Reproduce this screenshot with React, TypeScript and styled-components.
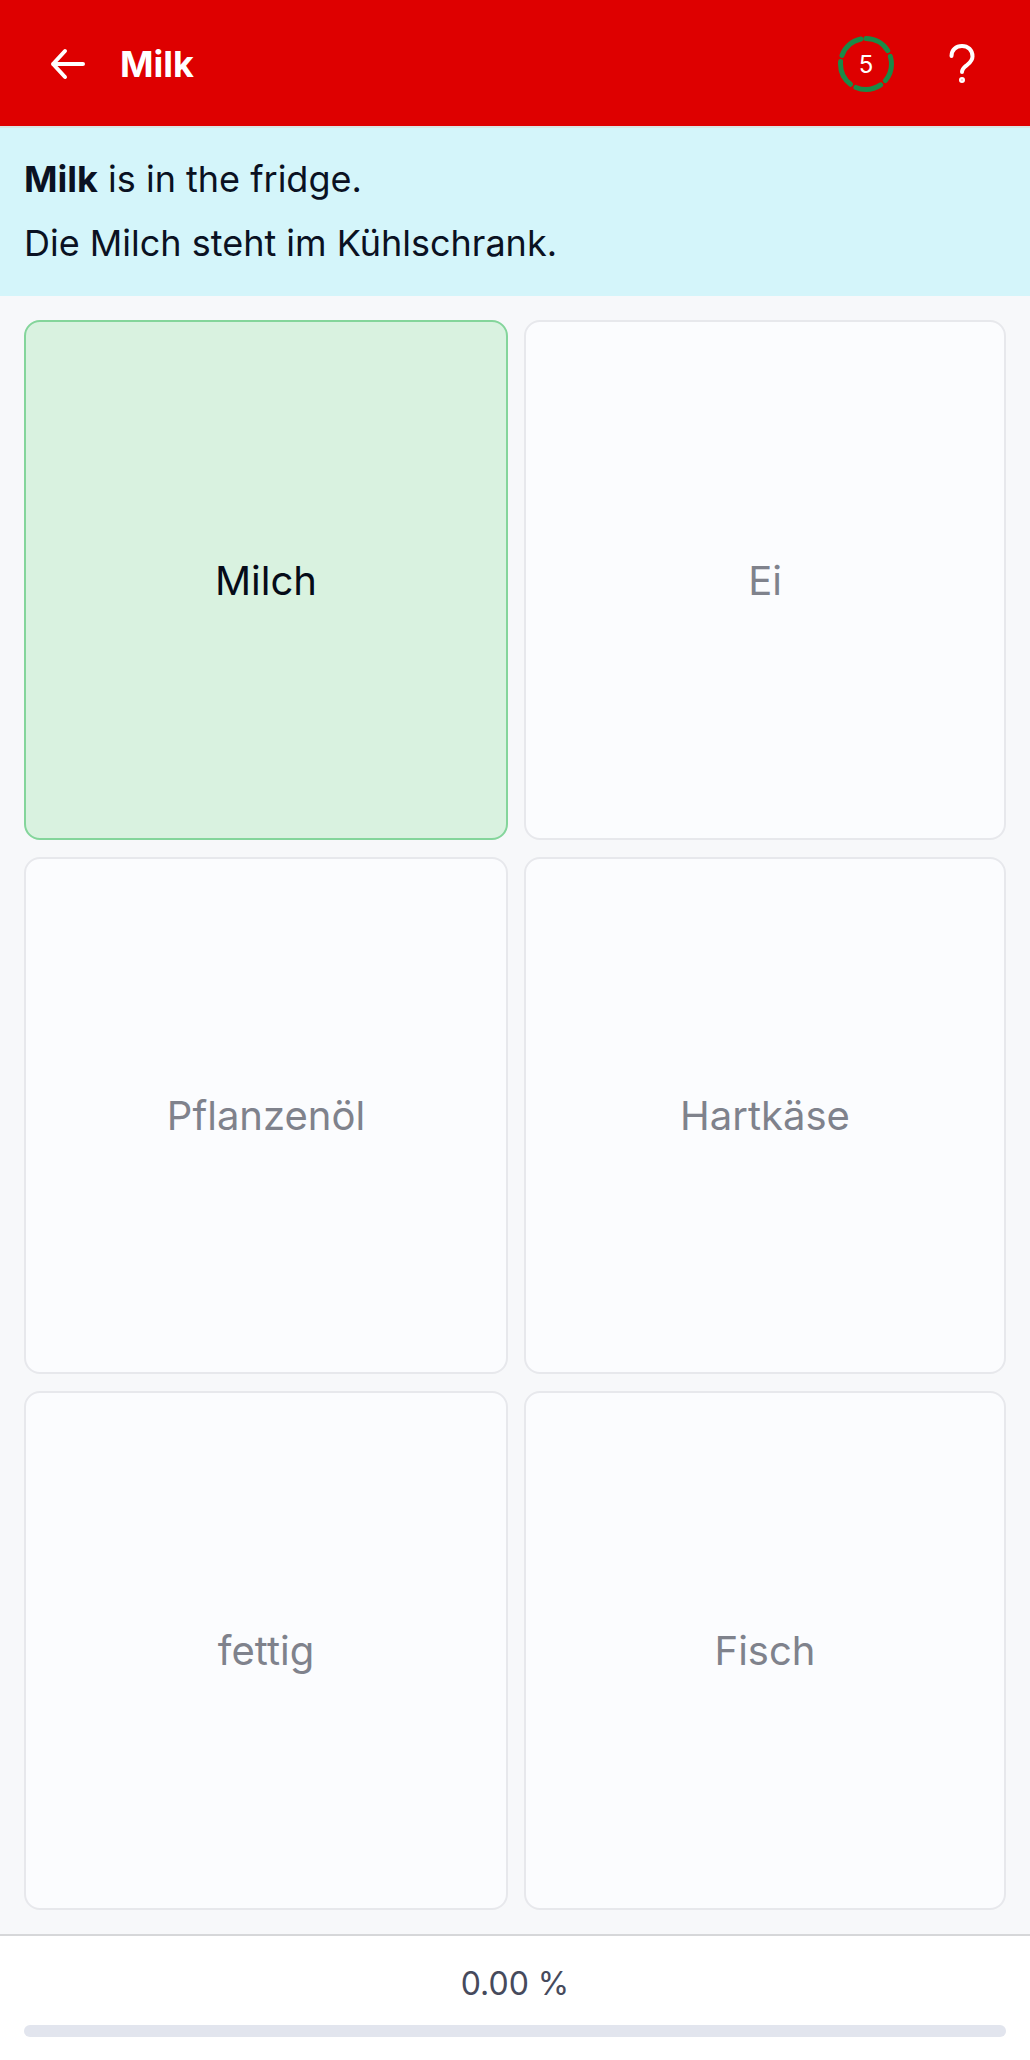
import React from "react";
import styled, { createGlobalStyle } from "styled-components";

const GlobalStyle = createGlobalStyle`
  html, body {
    margin: 0;
    padding: 0;
    background: #f7f8fa;
  }
  * {
    box-sizing: border-box;
  }
`;

const Page = styled.div`
  width: 1030px;
  height: 2060px;
  display: flex;
  flex-direction: column;
  font-family: Inter, "Liberation Sans", sans-serif;
`;

const Header = styled.header`
  height: 126px;
  flex: none;
  display: flex;
  align-items: center;
  background: #de0000;
  padding: 2px 54px 0 50px;
  color: #fff;
`;

const BackButton = styled.svg`
  width: 36px;
  height: 32px;
  margin-right: 34px;
`;

const Title = styled.h1`
  margin: 0;
  flex: 1;
  font-size: 36px;
  line-height: 40px;
  font-weight: 700;
`;

const Timer = styled.div`
  position: relative;
  width: 58px;
  height: 58px;
  margin-right: 53px;
  display: flex;
  align-items: center;
  justify-content: center;
  font-size: 24px;
  color: #fff;
`;

const TimerRing = styled.svg`
  position: absolute;
  inset: 0;
`;

const Help = styled.svg`
  width: 28px;
  height: 42px;
`;

const Sentence = styled.section`
  height: 170px;
  flex: none;
  background: #d4f5fa;
  border-top: 2px solid #d8e4e6;
  padding: 26px 24px 0;
  color: #0a1122;
  font-size: 36px;
  line-height: 50px;
`;

const Line = styled.p`
  margin: 0 0 14px;
  b {
    font-weight: 700;
  }
`;

const Options = styled.main`
  flex: 1;
  display: grid;
  grid-template-columns: 484px 482px;
  grid-template-rows: 520px 517px 519px;
  gap: 17px 16px;
  padding: 24px 24px 24px;
`;

const Option = styled.button<{ $selected?: boolean }>`
  display: flex;
  align-items: center;
  justify-content: center;
  padding: 0;
  font-family: inherit;
  font-size: 40px;
  border-radius: 16px;
  border: 2px solid ${(p) => (p.$selected ? "#84d59b" : "#e7e8ec")};
  background: ${(p) => (p.$selected ? "#d9f2e0" : "#fbfcfe")};
  color: ${(p) => (p.$selected ? "#050b18" : "#7f828c")};
`;

const Footer = styled.footer`
  height: 126px;
  flex: none;
  background: #fff;
  border-top: 2px solid #d6d7d9;
  padding: 29px 24px 0;
`;

const Percent = styled.div`
  text-align: center;
  font-size: 32px;
  line-height: 38px;
  color: #464a5c;
`;

const Track = styled.div`
  margin-top: 22px;
  height: 12px;
  border-radius: 6px;
  background: #e2e5ee;
  overflow: hidden;
`;

const Fill = styled.div`
  height: 100%;
  background: #1a8a45;
`;

const options = ["Milch", "Ei", "Pflanzenöl", "Hartkäse", "fettig", "Fisch"];

const App = () => {
  const progress = 0;

  return (
    <>
      <GlobalStyle />
      <Page>
        <Header>
          <BackButton viewBox="0 0 36 32" fill="none" stroke="#fff" strokeWidth="4" strokeLinecap="round" strokeLinejoin="round">
            <path d="M33 16H3M15 3 3 16l12 13" />
          </BackButton>
          <Title>Milk</Title>
          <Timer>
            <TimerRing viewBox="0 0 58 58" fill="none" stroke="#1b8a47" strokeWidth="5" strokeLinecap="round">
              <circle cx="29" cy="29" r="25.5" strokeDasharray="25.8 6.24" transform="rotate(-90 29 29)" />
            </TimerRing>
            5
          </Timer>
          <Help viewBox="0 0 28 42" fill="none" stroke="#fff" strokeWidth="4" strokeLinecap="round">
            <path d="M3.500 13C3.500 7 8 3 14 3s10.500 4 10.500 10.500c0 4.500-3 6.500-6 9-2.500 2-4.500 3.500-4.500 6.500" />
            <circle cx="14" cy="37" r="1" fill="#fff" />
          </Help>
        </Header>
        <Sentence>
          <Line>
            <b>Milk</b> is in the fridge.
          </Line>
          <Line>Die Milch steht im Kühlschrank.</Line>
        </Sentence>
        <Options>
          {options.map((label, i) => (
            <Option key={label} $selected={i === 0}>
              {label}
            </Option>
          ))}
        </Options>
        <Footer>
          <Percent>{progress.toFixed(2)} %</Percent>
          <Track>
            <Fill style={{ width: `${progress}%` }} />
          </Track>
        </Footer>
      </Page>
    </>
  );
};

export default App;
